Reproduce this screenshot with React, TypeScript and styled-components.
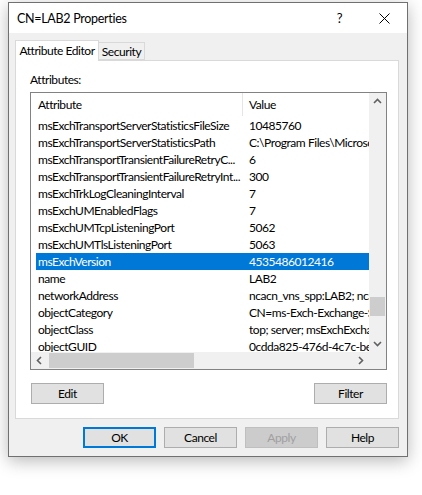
import React from 'react';
import styled, { createGlobalStyle } from 'styled-components';

const GlobalStyle = createGlobalStyle`
    body {
        margin:0;
        background:#ffffff;
        font-family:Lato, "Liberation Sans", Arial, sans-serif;
        font-size:12px;
        letter-spacing:-0.45px;
        color:#000000;
    }
`

type Row = { name: string; value: string };

const rows: Row[] = [
    { name: "msExchTransportServerStatisticsFileSize", value: "10485760" },
    { name: "msExchTransportServerStatisticsPath", value: "C:\\Program Files\\Microsoft\\Exchange Server" },
    { name: "msExchTransportTransientFailureRetryC...", value: "6" },
    { name: "msExchTransportTransientFailureRetryInt...", value: "300" },
    { name: "msExchTrkLogCleaningInterval", value: "7" },
    { name: "msExchUMEnabledFlags", value: "7" },
    { name: "msExchUMTcpListeningPort", value: "5062" },
    { name: "msExchUMTlsListeningPort", value: "5063" },
    { name: "msExchVersion", value: "4535486012416" },
    { name: "name", value: "LAB2" },
    { name: "networkAddress", value: "ncacn_vns_spp:LAB2; ncacn_ip_tcp:LAB2" },
    { name: "objectCategory", value: "CN=ms-Exch-Exchange-Server,CN=Schema" },
    { name: "objectClass", value: "top; server; msExchExchangeServer" },
    { name: "objectGUID", value: "0cdda825-476d-4c7c-be9a-1f2e3d4c5b6a" },
];

const Chevron = ({ dir }: { dir: 'up' | 'down' | 'left' | 'right' }) => {
    const d = {
        up: "M1 6 L4.5 2.5 L8 6",
        down: "M1 3 L4.5 6.5 L8 3",
        left: "M6 1 L2.5 4.5 L6 8",
        right: "M3 1 L6.5 4.5 L3 8",
    }[dir];
    return (
        <svg width="9" height="9" viewBox="0 0 9 9">
            <path d={d} fill="none" stroke="#606060" strokeWidth="1.6" />
        </svg>
    );
}

const App: React.FC = () => {
    return (
        <Page>
            <GlobalStyle />
            <Window>
                <TitleBar>
                    <Title>CN=LAB2 Properties</Title>
                    <TitleButton>?</TitleButton>
                    <TitleButton>
                        <svg width="11" height="11" viewBox="0 0 11 11">
                            <path d="M0.5 0.5 L10.5 10.5 M10.5 0.5 L0.5 10.5" stroke="#000" strokeWidth="1" />
                        </svg>
                    </TitleButton>
                </TitleBar>
                <Body>
                    <Tabs>
                        <Tab $active>Attribute Editor</Tab>
                        <Tab>Security</Tab>
                    </Tabs>
                    <Panel>
                        <Label>Attributes:</Label>
                        <ListBox>
                            <ListContent>
                                <HeaderRow>
                                    <HeaderCell $first>Attribute</HeaderCell>
                                    <HeaderCell>Value</HeaderCell>
                                </HeaderRow>
                                {rows.map((r) => (
                                    <ListRow key={r.name} $selected={r.name === "msExchVersion"}>
                                        <NameCell>{r.name}</NameCell>
                                        <ValueCell>{r.value}</ValueCell>
                                    </ListRow>
                                ))}
                            </ListContent>
                            <VScroll>
                                <ArrowBox><Chevron dir="up" /></ArrowBox>
                                <VTrack>
                                    <VThumb />
                                </VTrack>
                                <ArrowBox><Chevron dir="down" /></ArrowBox>
                            </VScroll>
                            <HScroll>
                                <ArrowBox><Chevron dir="left" /></ArrowBox>
                                <HTrack>
                                    <HThumb />
                                </HTrack>
                                <ArrowBox><Chevron dir="right" /></ArrowBox>
                            </HScroll>
                            <Corner />
                        </ListBox>
                        <ActionRow>
                            <Button>Edit</Button>
                            <Button>Filter</Button>
                        </ActionRow>
                    </Panel>
                    <Footer>
                        <Button $default>OK</Button>
                        <Button>Cancel</Button>
                        <Button $disabled>Apply</Button>
                        <Button>Help</Button>
                    </Footer>
                </Body>
            </Window>
        </Page>
    )
}

export default App;

const Page = styled.div`
    padding:2px 0 0 8px;
    width:422px;
    height:495px;
    box-sizing:border-box;
`

const Window = styled.div`
    width:400px;
    height:455px;
    box-sizing:border-box;
    border:1px solid #707070;
    background:#f0f0f0;
    box-shadow:0 4px 16px rgba(0,0,0,0.28);
    display:flex;
    flex-direction:column;
`

const TitleBar = styled.div`
    height:30px;
    background:#ffffff;
    display:flex;
    align-items:center;
    padding-left:8px;
`

const Title = styled.div`
    flex:1;
    font-size:12.5px;
    letter-spacing:-0.3px;
    padding-top:1px;
`

const TitleButton = styled.div`
    width:45px;
    height:30px;
    display:flex;
    align-items:center;
    justify-content:center;
    font-size:13px;
`

const Body = styled.div`
    flex:1;
    padding:7px 8px 0 6px;
    display:flex;
    flex-direction:column;
`

const Tabs = styled.div`
    display:flex;
    align-items:flex-end;
    height:20px;
    position:relative;
    z-index:1;
`

const Tab = styled.div<{ $active?: boolean }>`
    box-sizing:border-box;
    width:${({ $active }) => $active ? '84px' : '46px'};
    height:${({ $active }) => $active ? '21px' : '18px'};
    margin-bottom:${({ $active }) => $active ? '-1px' : '0'};
    padding-bottom:${({ $active }) => $active ? '2px' : '0'};
    border:1px solid #d9d9d9;
    border-bottom:${({ $active }) => $active ? 'none' : '1px solid #d9d9d9'};
    border-left:${({ $active }) => $active ? '1px solid #d9d9d9' : 'none'};
    background:${({ $active }) => $active ? '#ffffff' : '#f0f0f0'};
    display:flex;
    align-items:center;
    justify-content:center;
    white-space:nowrap;
`

const Panel = styled.div`
    height:359px;
    box-sizing:border-box;
    background:#ffffff;
    border:1px solid #d9d9d9;
    padding:12px 11px 0 14px;
    display:flex;
    flex-direction:column;
`

const Label = styled.div`
    height:19px;
    line-height:14px;
`

const ListBox = styled.div`
    width:357px;
    height:278px;
    box-sizing:border-box;
    border:1px solid #828282;
    display:grid;
    grid-template-columns:1fr 17px;
    grid-template-rows:1fr 17px;
    overflow:hidden;
`

const ListContent = styled.div`
    overflow:hidden;
    background:#ffffff;
`

const HeaderRow = styled.div`
    display:grid;
    grid-template-columns:212px 1fr;
    height:24px;
`

const HeaderCell = styled.div<{ $first?: boolean }>`
    display:flex;
    align-items:center;
    padding-left:${({ $first }) => $first ? '7px' : '6px'};
    border-right:${({ $first }) => $first ? '1px solid #e5e5e5' : 'none'};
    height:23px;
`

const ListRow = styled.div<{ $selected?: boolean }>`
    display:grid;
    grid-template-columns:207px 1fr;
    height:17px;
    margin-left:5px;
    align-items:center;
    background:${({ $selected }) => $selected ? '#0078d7' : 'transparent'};
    color:${({ $selected }) => $selected ? '#ffffff' : '#000000'};
`

const NameCell = styled.div`
    padding-left:2px;
    white-space:nowrap;
    overflow:hidden;
`

const ValueCell = styled.div`
    padding-left:6px;
    white-space:nowrap;
    overflow:hidden;
`

const VScroll = styled.div`
    background:#f0f0f0;
    display:flex;
    flex-direction:column;
`

const HScroll = styled.div`
    background:#f0f0f0;
    display:flex;
`

const ArrowBox = styled.div`
    width:17px;
    height:17px;
    flex:none;
    display:flex;
    align-items:center;
    justify-content:center;
`

const VTrack = styled.div`
    flex:1;
    display:flex;
    flex-direction:column;
    justify-content:flex-end;
    padding-bottom:19px;
`

const VThumb = styled.div`
    height:19px;
    margin:0 1px;
    background:#cdcdcd;
`

const HTrack = styled.div`
    flex:1;
    display:flex;
    align-items:center;
    padding-left:1px;
`

const HThumb = styled.div`
    width:145px;
    height:15px;
    background:#cdcdcd;
`

const Corner = styled.div`
    background:#f0f0f0;
`

const ActionRow = styled.div`
    display:flex;
    justify-content:space-between;
    padding:13px 0 0 1px;
`

const Footer = styled.div`
    display:flex;
    justify-content:flex-end;
    gap:8px;
    padding-top:8px;
`

const Button = styled.div<{ $default?: boolean; $disabled?: boolean }>`
    width:73px;
    height:21px;
    box-sizing:border-box;
    display:flex;
    align-items:center;
    justify-content:center;
    background:${({ $disabled }) => $disabled ? '#cccccc' : '#e1e1e1'};
    color:${({ $disabled }) => $disabled ? '#a0a0a0' : '#000000'};
    border:${({ $default, $disabled }) => $default ? '2px solid #0078d7' : $disabled ? '1px solid #bfbfbf' : '1px solid #adadad'};
`
